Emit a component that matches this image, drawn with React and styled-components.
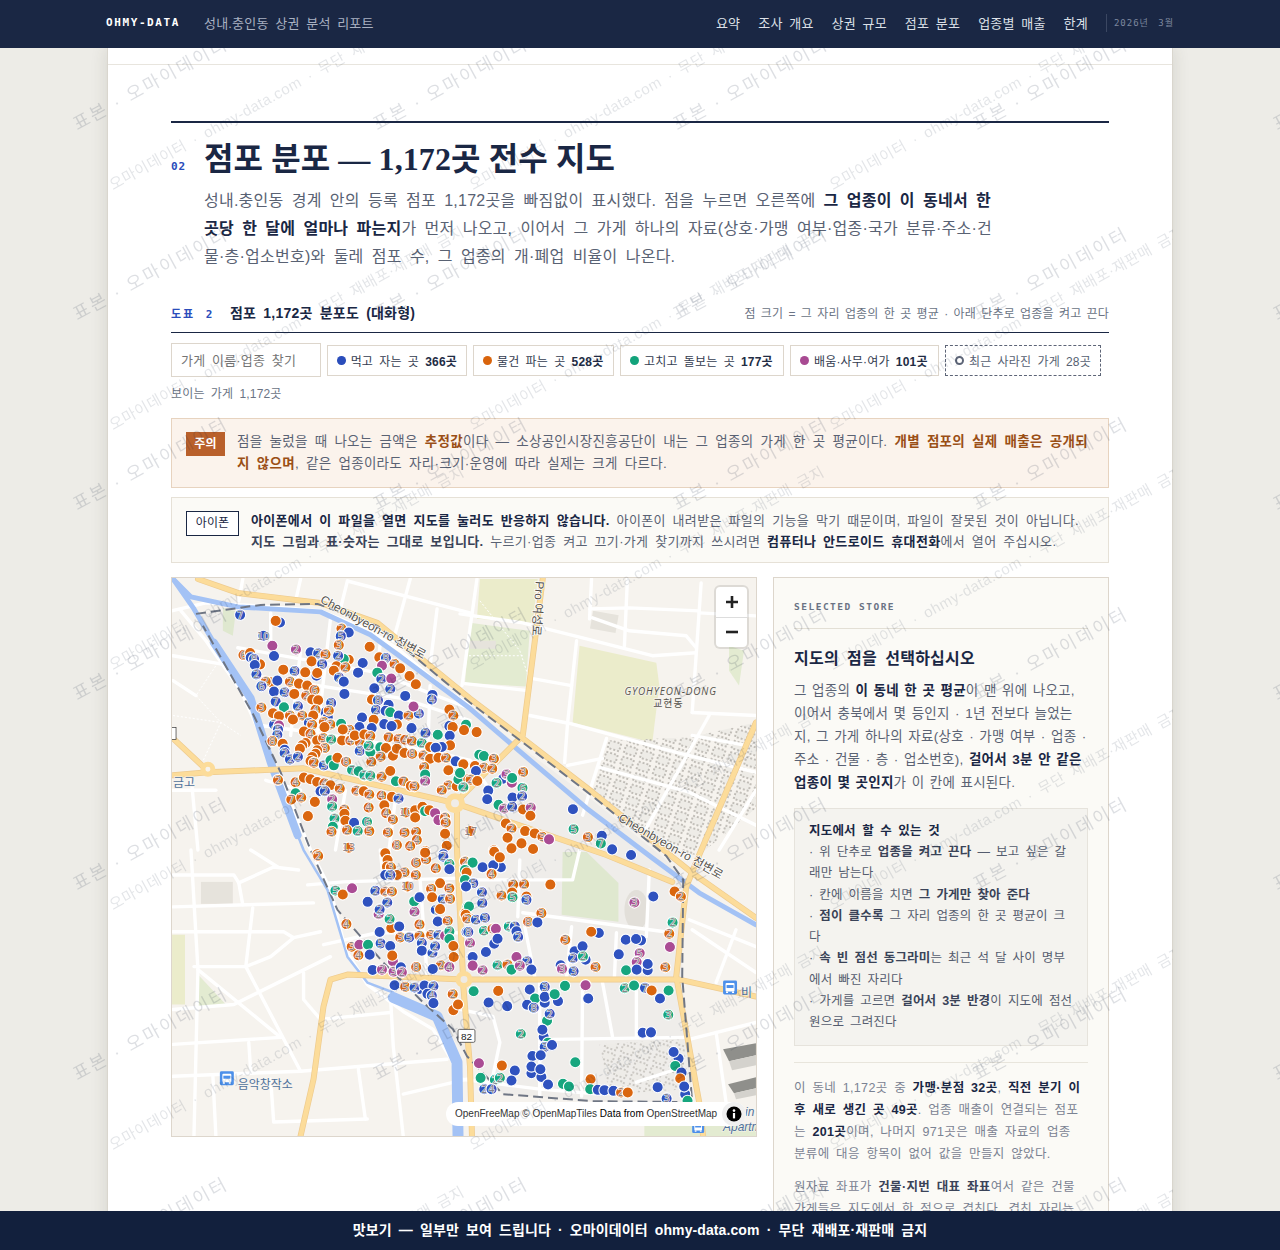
import React from 'react';
import styled, { createGlobalStyle } from 'styled-components';

const NAVY = '#1a2744';
const SANS = '"Liberation Sans", "Noto Sans CJK KR", sans-serif';
const SERIF = '"Liberation Serif", "Noto Sans CJK KR", serif';
const MONO = '"DejaVu Sans Mono", "Noto Sans CJK KR", monospace';

const GlobalStyle = createGlobalStyle`
	html, body {
		margin: 0;
		height: 100%;
		overflow: hidden;
		background: #edece7;
		font-family: ${SANS};
		color: ${NAVY};
	}
	* {
		box-sizing: border-box;
		letter-spacing: 0.015em;
		word-spacing: 0.22em;
	}
`;

const NAV_ITEMS = ['요약', '조사 개요', '상권 규모', '점포 분포', '업종별 매출', '한계'];

const CHIPS = [
	{ color: '#2a4dbb', label: '먹고 자는 곳', count: '366곳', width: 140 },
	{ color: '#d9640c', label: '물건 파는 곳', count: '528곳', width: 141 },
	{ color: '#12a37b', label: '고치고 돌보는 곳', count: '177곳', width: 164 },
	{ color: '#a84a92', label: '배움·사무·여가', count: '101곳', width: 149 },
];

const COLORS = { b: '#2f52bf', o: '#da660f', g: '#17a67e', p: '#aa4c94' };

// 확대 화면에서 옮겨 적은 점: 가로 세로 색 숫자 (좌표는 3배율, 오프셋 따로)
const MARKERS = [
	[170, 575, `208 117 b 7;328 140 b;315 135 o;278 180 b 10;305 210 p;376 221 p 2;310 241 b;218 238 o 6;238 232 o;240 245 b;268 266 o;250 250 b 8;252 268 b;257 296 b 2;300 320 o;320 315 b;285 318 o 2;272 332 b 6;338 282 o;372 286 b 3;404 290 o;358 318 o 2;385 324 o;410 330 o;420 230 b;443 233 b 2;465 236 o 3;423 257 o;455 265 b 5;438 300 b;440 292 o;513 158 o 2;535 170 b;511 181 b 5;505 208 o 3;535 252 o;520 250 g;503 240 b 2;498 272 o;525 275 o 2;490 285 o;506 306 b 2;520 318 b;577 262 b;563 291 b;598 213 o;627 245 o;647 247 b 8;635 270 p;673 265 o 2;690 278 o;621 291 g;633 310 b 2;663 309 p;718 301 o;737 326 o;612 338 b;660 340 b 2;705 361 b;787 358 b;785 372 b 4;522 355 b;310 348 b;342 350 b 3;371 355 o;407 360 o 2;432 343 o 6;425 372 o;443 374 o;315 378 b 7;482 382 b 3;605 372 o;623 374 b 8;655 388 b;617 403 b 2;646 406 b;660 410 g;686 420 b;715 420 o 2;746 414 b 4;730 393 p;272 396 o 3;340 395 g;382 392 b 2;307 413 o;325 422 o;358 420 o 2;395 420 o 3;367 432 o;465 410 b;472 425 b;435 403 o 4;475 405 o 2;428 420 o;415 442 b 3;425 448 o 2;460 440 o 2;480 447 o 2;462 455 o;512 445 g;575 426 b;610 433 o;567 455 b;604 458 b;642 446 b;680 447 o;664 452 b;724 458 b;838 402 o;850 420 o 2;838 452 b;848 455 o;888 447 g;882 463 o;310 447 b 2;325 450 p;322 462 b 5;320 478 b 5;400 468 o;420 475 o 4;305 497 o 8;336 505 o;405 503 o;395 510 o;388 520 o;440 495 o;458 488 o 3;482 492 g 2;515 495 o;540 495 o 4;568 500 o 2;537 463 o 8;517 462 o;553 480 o;582 477 o;600 482 o 2;655 485 o 7;685 490 o 3;705 493 o 4;725 497 o 2;755 503 g 2;766 473 b 2;803 478 g;839 481 b;840 510 o;342 523 b;342 533 b 2;358 552 b 2;382 544 b 2;463 518 o 3;440 525 o;435 535 o;425 545 o;420 557 o;430 562 o 2;460 570 b 3;480 555 g;490 570 g;501 547 o;527 559 o 8;568 527 b 3;600 530 g;595 511 g 2;630 516 g;647 518 o;631 544 o 2;668 541 o;680 520 o;703 533 o;726 535 o 8;760 540 o 2;780 515 o;815 515 b;797 517 b;780 550 o;805 547 o;828 548 o 2;857 558 b;880 566 o;603 560 o 2;545 584 g 7;565 588 g;582 600 g 2;600 601 g 2;634 604 o 2;660 587 o;677 618 g;700 618 o 7;722 632 o;733 633 o 3;762 575 o 2;765 598 g;765 618 p 2;835 585 o;835 630 o 2;815 645 o 2;860 633 o;880 637 g 2;867 592 g;865 612 g;895 612 o;322 614 o 2;375 621 o 4;400 607 o;420 612 o;440 620 o;462 624 o 4;480 630 o;508 640 o 2;450 648 b;463 648 b 2;558 646 o 2;580 648 o;597 658 o 2;634 661 o 4;665 665 o;685 670 b 2;375 654 g;362 673 o 7;392 667 o 2;433 680 o;485 672 p 2;485 694 g 2;642 690 o;595 697 o 4;522 703 o 3;522 716 o;492 730 g 2;525 737 o;551 743 b;590 740 g 6;487 755 g;483 770 o 3;530 765 o 2;562 768 g 2;597 768 o 5;653 772 o 3;703 772 o 5;738 770 o 2;740 795 o 4;720 813 o 4;680 810 o 8;830 812 o;825 776 o;412 723 o;707 712 o 10;735 705 o;735 727 o;757 695 o;765 708 g;778 705 o;795 714 p;805 735 p;825 727 o 3;827 742 o 3;648 714 o 4;668 733 o 3;535 818 o 13;440 838 o;765 828 o 2;645 835 o;820 838 b`],
	[460, 575, `18 448 g;12 464 o;50 470 o;58 538 g;72 542 g;102 550 o 3;10 567 o;45 572 o;72 577 o 2;97 580 o 2;48 587 b;0 593 g;32 613 o 2;52 617 o;10 636 g 2;130 610 b;140 597 p 3;156 622 p;157 608 g;190 590 o 3;110 623 g 2;188 638 g 6;85 646 b;82 672 b;158 667 b;187 663 b 2;116 689 g;133 700 p 2;157 695 b 2;190 703 o;213 697 p 2;212 722 o;340 702 b;138 745 o;155 760 o 2;32 768 o 17;196 768 o;225 775 o;248 785 o 3;268 793 p;143 788 o;185 805 o;155 820 o;220 822 o;102 826 o;342 762 g 5;385 786 o 3;427 782 b;424 805 g 7;458 823 b;515 840 b`],
	[170, 850, `443 18 o 2;495 122 g 5;517 134 o;545 115 p;615 123 b 2;592 156 b;645 125 o 2;665 125 o 3;651 158 b 2;625 193 p 2;628 179 b 2;652 30 o;650 50 o;662 52 o 3;703 67 o 3;680 75 o;737 75 o 3;738 38 o 6;768 28 o 5;765 8 o;797 55 o 4;820 20 b 2;838 42 g 2;838 58 b;645 75 b;660 75 b 3;712 110 o 10;810 100 o;783 117 o 3;838 115 o 5;786 142 o;818 148 b 2;840 147 o 3;732 155 g;748 142 b;733 186 p 2;797 180 b 7;810 178 o;803 215 b;833 213 o 3;748 224 o 4;663 235 o;658 208 g 2;687 230 b;528 223 o 4;628 247 b;690 263 o 3;717 263 b 5;748 258 o 2;783 255 o 3;805 256 b 2;825 258 p;838 245 g 2;838 268 g;755 280 b 2;755 303 b;787 310 b 2;795 290 b 2;850 289 o;851 322 o;544 291 o 3;567 285 p;593 285 g;631 281 b 5;660 289 b;598 315 b;564 317 o 4;668 335 p;666 318 o;812 347 o 2;838 352 p 4;738 352 o 8;607 361 b;635 360 p 2;670 366 p 3;692 353 b;695 368 p 2;788 358 b;673 407 b;705 412 o 5;748 418 b;733 414 b 2;763 408 b;790 410 b 2;772 433 b;785 438 b 4;790 461 b;848 434 o 2;850 482 o;864 465 o;885 35 o 2;885 55 g;890 95 g 3;888 108 b;893 170 g;886 190 o;897 205 o 2;890 247 b 8;905 322 b`],
	[460, 850, `15 35 o 2;38 38 g;68 52 b;123 52 b;100 46 b;103 5 o;120 22 o;95 72 o 4;15 60 g;20 68 o;15 90 g;40 100 b 5;18 110 b;160 104 o 2;193 103 o 2;272 104 o;66 127 b 2;125 137 o 2;157 128 o;158 142 g 5;200 140 o;200 150 b 3;67 160 b 2;27 170 g;245 190 o 3;17 195 o;22 207 o 2;48 210 b 2;75 204 b 3;205 216 o 8;233 218 b;25 247 b 8;72 243 g 2;98 237 o 5;108 237 p;147 230 g 2;165 230 b 1;170 245 b;175 262 b 2;30 280 p 2;103 282 b;113 267 b;78 307 b;38 322 b;170 322 p;202 335 b 2;113 347 g 2;143 345 o 2;155 360 g;180 348 p 2;215 360 b;38 348 p;68 362 p 2;317 270 o 3;418 250 b;395 246 o;345 305 b;369 290 b;340 326 b 2;378 330 b;370 320 g 2;303 347 b;307 358 p 3;342 365 b 3;408 352 o 3;499 270 b;545 272 b;530 268 b;478 314 b;541 310 p 5;532 337 p 2;500 362 g;532 360 b;565 362 b;565 343 b;618 353 o 3;582 140 b;525 158 p 3;646 125 o;665 140 o 2;640 218 g 2;630 252 o 2;632 292 p;41 425 g;115 424 o;86 459 b;142 470 b;210 420 b;255 412 b 3;316 409 g;378 407 p;255 460 b;226 447 g;255 442 b;295 455 b;285 434 g;202 466 b;222 475 b 8;386 447 b;496 416 g 2;524 408 g;557 415 b 7;577 423 o;628 423 g;602 447 b;627 496 g 3;262 514 g;270 493 b 2;183 554 g 2;252 562 b;248 541 b;265 580 g;255 593 b 3;277 587 b;550 550 b;575 549 b;218 620 b;243 618 b;215 672 b;215 652 b;245 683 b;242 660 b;265 706 b;57 642 p;126 649 o;165 664 b;155 694 b;62 686 g;105 692 g 2;120 686 g 2;347 639 g;310 704 g;328 712 g;393 690 o;392 720 g;415 722 b;435 723 b;462 725 b;485 730 o 2;505 730 o;595 714 b;658 628 b;643 608 b;648 650 g;667 670 b;663 688 o;678 735 b;675 712 b;685 755 g;622 748 b 3;73 720 b 2;95 720 b 4`],
];

const markers = MARKERS.flatMap(([ox, oy, text]) =>
	text.split(';').map((row) => {
		const [x, y, c, n] = row.split(' ');
		return { x: ox + x / 3, y: oy + y / 3, color: COLORS[c], n };
	}),
);

const WHITE_ROADS = [
	'170,610 205,602 260,605 320,610 370,630 400,650 440,685 470,705',
	'180,610 205,640 240,690 260,735 285,790 310,850 330,890 345,950 367,985 403,1012 433,1030 453,1063 458,1100',
	'172,655 230,665',
	'172,680 195,695',
	'242,578 238,600',
	'300,578 295,600',
	'347,580 340,608',
	'410,578 393,640',
	'347,580 470,612',
	'437,608 430,665',
	'237,647 377,672 423,690 470,708',
	'253,675 350,690 403,698 470,720',
	'260,725 313,732 437,752 470,760',
	'270,612 270,640',
	'330,618 317,732',
	'380,642 370,738',
	'430,685 427,765',
	'300,650 290,735',
	'265,780 300,790',
	'345,790 335,850',
	'395,800 385,880',
	'190,850 197,970 193,1137',
	'172,875 233,875 238,883 273,867 298,870',
	'250,850 277,867',
	'238,883 242,905',
	'172,907 313,903',
	'172,932 283,932 293,938 320,932',
	'193,967 245,967 270,957 293,938',
	'252,908 245,967 300,1072',
	'197,970 280,1038',
	'172,1010 233,1005 330,957',
	'172,1045 280,1038',
	'303,973 303,1000 320,1020 390,1013',
	'172,1077 300,1072 447,1060',
	'248,1043 250,1073',
	'212,1077 215,1137',
	'270,1080 273,1123 367,1120',
	'358,1070 365,1120',
	'390,993 393,1047 403,1137',
	'403,1095 467,1080',
	'307,885 343,882 465,878',
	'323,945 377,933 463,933',
	'380,850 383,880',
	'420,880 427,977',
	'172,790 215,790',
	'190,775 197,850',
	'467,880 573,880 580,850',
	'523,913 673,933',
	'520,860 518,917',
	'525,927 535,977',
	'572,927 567,977',
	'617,933 615,977',
	'650,870 647,937',
	'460,1010 493,1017 500,1043 493,1077',
	'540,983 540,1097',
	'583,983 582,1097',
	'603,983 613,1037',
	'637,990 637,1037',
	'553,1040 687,1038',
	'462,1080 540,1090 600,1095',
	'637,1083 677,1070',
	'690,920 757,947',
	'693,930 757,973',
	'737,930 717,983',
	'690,1040 757,1023',
	'717,1033 727,1103',
	'477,578 462,685',
	'460,613 523,622 587,638 653,655 697,652',
	'592,578 590,618',
	'628,578 625,645',
	'590,608 630,607 700,610',
	'702,582 693,712',
	'593,617 630,630 687,635 697,647',
	'577,640 568,722 565,762',
	'533,678 572,685',
	'465,683 528,690',
	'530,715 570,723 677,752 757,772',
	'607,738 593,782 583,815',
	'568,765 603,758',
	'600,767 690,792 757,825',
	'710,715 643,835',
	'693,735 747,745',
	'693,712 757,715',
	'757,790 720,850',
	'700,612 757,615',
	'470,760 490,790',
];

const YELLOW_ROADS = [
	'197,578 237,592 320,602 377,622 470,698 523,738 593,792 667,852 693,873 757,918',
	'543,578 523,735',
	'757,722 700,855 687,887 677,977 700,1103 704,1137',
	'172,738 203,767 207,769',
	'172,775 207,772 303,768 455,803',
	'455,803 520,738',
	'455,803 607,855 673,882',
	'457,803 457,850 463,977',
	'300,1137 313,1080 323,1007 330,980 347,975 463,980',
	'463,980 680,980 757,997',
	'463,983 470,1067 472,1137',
];

const Header = () => (
	<TopBar>
		<TopInner>
			<Brand>OHMY-DATA</Brand>
			<Subtitle>성내.충인동 상권 분석 리포트</Subtitle>
			<TopNav>
				{NAV_ITEMS.map((item) => (
					<TopLink key={item}>{item}</TopLink>
				))}
				<DateLabel>2026년 3월</DateLabel>
			</TopNav>
		</TopInner>
	</TopBar>
);

const BusIcon = ({ x, y, size = 14 }) => (
	<g transform={`translate(${x} ${y}) scale(${size / 14})`}>
		<rect width="14" height="14" rx="1.5" fill="#4d90ea" />
		<rect x="2.5" y="2.5" width="9" height="8.5" rx="1" fill="#fff" />
		<rect x="3.5" y="4.5" width="7" height="3" fill="#4d90ea" />
		<rect x="3" y="11" width="2" height="1.5" fill="#fff" />
		<rect x="9" y="11" width="2" height="1.5" fill="#fff" />
	</g>
);

const StoreMap = () => (
	<MapSvg viewBox="171 577 586 560" xmlns="http://www.w3.org/2000/svg">
		<defs>
			<pattern id="lots" width="17" height="12" patternUnits="userSpaceOnUse" patternTransform="rotate(17)">
				<rect x="1" y="1" width="12" height="8" fill="#eeece7" stroke="#77746c" strokeWidth="0.8" strokeDasharray="2 2" />
			</pattern>
		</defs>
		<rect x="171" y="577" width="586" height="560" fill="#f6f3ee" />

		{/* 분석 구역 */}
		<polygon points="195,613 260,608 320,612 377,632 470,708 523,748 593,800 667,860 684,880 683,977 693,1103 593,1102 503,1095 467,1057 423,1003 383,963 337,910 307,845 280,772 253,715 202,625" fill="#efedea" />

		{/* 공원 */}
		<polygon points="580,645 657,662 660,685 653,742 573,722" fill="#ebeccb" />
		<polygon points="480,578 538,578 533,622 477,618" fill="#ebeccb" />
		<polygon points="470,622 530,630 526,686 465,682" fill="#e3ebd1" />
		<polygon points="563,852 587,852 619,883 619,922 562,915" fill="#dfe8cf" />
		<polygon points="171,935 184,935 184,1005 171,1005" fill="#ebeccb" />
		<polygon points="197,975 225,1005 197,1007" fill="#e3ebd1" />
		<polygon points="222,607 235,610 232,635 222,630" fill="#dfe8cf" />
		<polygon points="730,645 745,650 740,685 730,670" fill="#e3ebd1" />
		<polygon points="645,1138 757,1138 757,1125 645,1125" fill="#e3ebd1" />

		{/* 건물 덩어리 */}
		<polygon points="607,740 690,737 757,722 757,808 700,855 660,852 593,790" fill="url(#lots)" />
		<polygon points="600,1045 685,1040 688,1090 610,1095" fill="url(#lots)" opacity="0.75" />
		<rect x="592" y="612" width="26" height="18" fill="#e6e3dc" transform="rotate(10 605 620)" />
		<rect x="200" y="882" width="32" height="22" fill="#e6e3dc" />
		<ellipse cx="637" cy="910" rx="12" ry="20" fill="#e2dfd9" />
		<rect x="470" y="640" width="26" height="8" fill="#e6e3dc" />
		<polygon points="724,1050 757,1044 757,1056 730,1062" fill="#8f8f8b" />
		<polygon points="730,1062 757,1056 757,1066 733,1071" fill="#d4d2cd" />
		<polygon points="729,1085 757,1078 757,1089 735,1094" fill="#8f8f8b" />
		<polygon points="735,1094 757,1089 757,1096 737,1100" fill="#d4d2cd" />

		{/* 길 */}
		<g fill="none" stroke="#fff" strokeWidth="3.4" strokeLinejoin="round" strokeLinecap="round">
			{WHITE_ROADS.map((points) => (
				<polyline key={points} points={points} />
			))}
		</g>
		<g fill="none" stroke="#fff" strokeWidth="1" strokeDasharray="2 2">
			<polyline points="217,662 195,695 220,722 200,765" />
			<polyline points="172,715 220,722 240,735" />
			<polyline points="480,600 520,650 530,680" />
			<polyline points="465,655 525,655" />
		</g>

		{/* 물길 */}
		<g fill="none" stroke="#a3c2f5" strokeLinejoin="round" strokeLinecap="round">
			<polyline points="172,578 193,608 213,642" strokeWidth="5" />
			<polyline points="213,642 250,698 270,762 297,835" strokeWidth="8" />
			<polyline points="297,835 303,850 327,890 347,957 367,983 393,993" strokeWidth="2.5" />
			<polyline points="393,998 437,1017 457,1063 458,1137" strokeWidth="11" />
			<polyline points="172,578 190,596 237,606 320,611 370,634 403,658 470,708 520,751 587,808 653,858 700,893 757,925" strokeWidth="5" />
		</g>

		<g fill="none" strokeLinejoin="round" strokeLinecap="round">
			<g stroke="#eecb8f" strokeWidth="6">
				{YELLOW_ROADS.map((points) => (
					<polyline key={points} points={points} />
				))}
			</g>
			<g stroke="#fcdc9a" strokeWidth="4.6">
				{YELLOW_ROADS.map((points) => (
					<polyline key={points} points={points} />
				))}
			</g>
		</g>
		<circle cx="207" cy="769" r="5" fill="#f6f3ee" stroke="#fcdc9a" strokeWidth="5" />
		<circle cx="455" cy="803" r="7" fill="#f0ede8" stroke="#fcdc9a" strokeWidth="6" />
		<circle cx="464" cy="980" r="6" fill="#eeeae4" stroke="#fcdc9a" strokeWidth="5" />

		{/* 구역 경계 */}
		<polyline
			points="195,613 260,604 317,603 377,625 470,702 523,742 593,796 667,856 684,880 683,977 693,1103 593,1102 503,1095 467,1057 453,1030 423,1003 383,963 337,910 310,850 280,772 253,715 202,625"
			fill="none"
			stroke="#6f7684"
			strokeWidth="2"
			strokeDasharray="10 5"
		/>

		{/* 지도 글자 */}
		<MapRoadLabel transform="translate(319 601) rotate(29)">Cheonbyeon-ro 천변로</MapRoadLabel>
		<MapRoadLabel transform="translate(618 820) rotate(30)">Cheonbyeon-ro 천변로</MapRoadLabel>
		<MapRoadLabel transform="translate(536 580) rotate(94)">Pro 여성로</MapRoadLabel>
		<MapPlaceLabel x="625" y="694" fontStyle="italic">GYOHYEON-DONG</MapPlaceLabel>
		<MapPlaceLabel x="654" y="706">교현동</MapPlaceLabel>
		<MapPoiLabel x="172" y="787">금고</MapPoiLabel>
		<MapPoiLabel x="237" y="1090">음악창작소</MapPoiLabel>
		<MapPoiLabel x="742" y="998">비</MapPoiLabel>
		<MapPoiLabel x="746" y="1117" fontStyle="italic">in</MapPoiLabel>
		<MapPoiLabel x="724" y="1132" fontStyle="italic">Apartm</MapPoiLabel>
		<BusIcon x="219" y="1072" />
		<BusIcon x="724" y="981" />
		<BusIcon x="693" y="1122" size="12" />
		<rect x="458" y="1030" width="17" height="13" rx="1.5" fill="#fff" stroke="#444" strokeWidth="0.8" />
		<MapShield x="466.5" y="1040.5">82</MapShield>
		<rect x="170" y="727" width="5" height="12" fill="#fff" stroke="#333" strokeWidth="0.7" />

		{/* 점포 */}
		{markers.map((m, i) => (
			<g key={i}>
				<circle cx={m.x} cy={m.y} r="5.6" fill={m.color} stroke="#fff" strokeWidth="1.1" />
				{m.n && (
					<MarkerDigit x={m.x} y={m.y + 3.8}>
						{m.n}
					</MarkerDigit>
				)}
			</g>
		))}
	</MapSvg>
);

const MapBox = () => (
	<MapFrame>
		<StoreMap />
		<ZoomControl>
			<ZoomButton aria-label="확대">
				<svg width="14" height="14" viewBox="0 0 14 14">
					<path d="M1 7h12M7 1v12" stroke="#222" strokeWidth="2.6" />
				</svg>
			</ZoomButton>
			<ZoomButton aria-label="축소">
				<svg width="14" height="14" viewBox="0 0 14 14">
					<path d="M1 7h12" stroke="#222" strokeWidth="2.6" />
				</svg>
			</ZoomButton>
		</ZoomControl>
		<Attribution>
			<span>
				OpenFreeMap © OpenMapTiles <b>Data from</b> OpenStreetMap
			</span>
			<InfoDot>
				<svg width="16" height="16" viewBox="0 0 16 16">
					<circle cx="8" cy="8" r="7.5" fill="#000" />
					<rect x="6.9" y="7" width="2.2" height="5.4" fill="#fff" />
					<circle cx="8" cy="4.6" r="1.3" fill="#fff" />
				</svg>
			</InfoDot>
		</Attribution>
	</MapFrame>
);

const SidePanel = () => (
	<Panel>
		<PanelEyebrow>SELECTED STORE</PanelEyebrow>
		<PanelTitle>지도의 점을 선택하십시오</PanelTitle>
		<PanelText>
			그 업종의 <b>이 동네 한 곳 평균</b>이 맨 위에 나오고, 이어서 충북에서 몇 등인지 · 1년 전보다 늘었는지, 그 가게 하나의 자료(상호 ·
			가맹 여부 · 업종 · 주소 · 건물 · 층 · 업소번호), <b>걸어서 3분 안 같은 업종이 몇 곳인지</b>가 이 칸에 표시된다.
		</PanelText>
		<HelpBox>
			<HelpTitle>지도에서 할 수 있는 것</HelpTitle>
			<HelpLine>
				· 위 단추로 <b>업종을 켜고 끈다</b> — 보고 싶은 갈래만 남는다
			</HelpLine>
			<HelpLine>
				· 칸에 이름을 치면 <b>그 가게만 찾아 준다</b>
			</HelpLine>
			<HelpLine>
				· <b>점이 클수록</b> 그 자리 업종의 한 곳 평균이 크다
			</HelpLine>
			<HelpLine>
				· <b>속 빈 점선 동그라미</b>는 최근 석 달 사이 명부에서 빠진 자리다
			</HelpLine>
			<HelpLine>
				· 가게를 고르면 <b>걸어서 3분 반경</b>이 지도에 점선 원으로 그려진다
			</HelpLine>
		</HelpBox>
		<PanelNote>
			이 동네 1,172곳 중 <b>가맹·분점 32곳</b>, <b>직전 분기 이후 새로 생긴 곳 49곳</b>. 업종 매출이 연결되는 점포는 <b>201곳</b>이며,
			나머지 971곳은 매출 자료의 업종 분류에 대응 항목이 없어 값을 만들지 않았다.
		</PanelNote>
		<PanelNoteNext>
			원자료 좌표가 <b>건물·지번 대표 좌표</b>여서 같은 건물 가게들은 지도에서 한 점으로 겹친다. 겹친 자리는 숫자로 표시한다.
		</PanelNoteNext>
	</Panel>
);

const Watermarks = () => {
	const big = [];
	const small = [];
	for (let r = 0; r < 7; r++) {
		for (let c = 0; c < 5; c++) {
			big.push({ left: 80 + c * 300, top: 112 + r * 190 });
		}
	}
	for (let r = 0; r < 6; r++) {
		for (let c = 0; c < 3; c++) {
			small.push({ left: 8 + c * 360, top: 176 + r * 240 });
		}
	}
	return (
		<WatermarkLayer aria-hidden="true">
			{big.map((pos) => (
				<BigMark key={`${pos.left}-${pos.top}`} style={pos}>
					표본 · 오마이데이터
				</BigMark>
			))}
			<SheetMarks>
				{small.map((pos) => (
					<SmallMark key={`${pos.left}-${pos.top}`} style={pos}>
						오마이데이터 · ohmy-data.com · 무단 재배포·재판매 금지
					</SmallMark>
				))}
			</SheetMarks>
		</WatermarkLayer>
	);
};

const App = () => (
	<>
		<GlobalStyle />
		<Header />
		<Sheet>
			<PrevEdge />
			<Section>
				<SectionHead>
					<SectionNo>02</SectionNo>
					<SectionTitle>점포 분포 — 1,172곳 전수 지도</SectionTitle>
				</SectionHead>
				<Lead>
					성내.충인동 경계 안의 등록 점포 1,172곳을 빠짐없이 표시했다. 점을 누르면 오른쪽에 <b>그 업종이 이 동네서 한 곳당 한 달에 얼마나 파는지</b>가
					먼저 나오고, 이어서 그 가게 하나의 자료(상호·가맹 여부·업종·국가 분류·주소·건물·층·업소번호)와 둘레 점포 수, 그 업종의 개·폐업 비율이
					나온다.
				</Lead>
				<FigureHead>
					<FigureNo>도표 2</FigureNo>
					<FigureTitle>점포 1,172곳 분포도 (대화형)</FigureTitle>
					<FigureNote>점 크기 = 그 자리 업종의 한 곳 평균 · 아래 단추로 업종을 켜고 끈다</FigureNote>
				</FigureHead>
				<Controls>
					<SearchBox placeholder="가게 이름·업종 찾기" />
					{CHIPS.map((chip) => (
						<Chip key={chip.label} $width={chip.width}>
							<Dot $color={chip.color} />
							{chip.label} <b>{chip.count}</b>
						</Chip>
					))}
					<Chip $dashed $width={156}>
						<RingDot />
						최근 사라진 가게 28곳
					</Chip>
				</Controls>
				<VisibleCount>보이는 가게 1,172곳</VisibleCount>
				<Notice $tone="warn">
					<WarnTag>주의</WarnTag>
					<WarnText>
						점을 눌렀을 때 나오는 금액은 <em>추정값</em>이다 — 소상공인시장진흥공단이 내는 그 업종의 가게 한 곳 평균이다.{' '}
						<em>개별 점포의 실제 매출은 공개되지 않으며</em>, 같은 업종이라도 자리·크기·운영에 따라 실제는 크게 다르다.
					</WarnText>
				</Notice>
				<Notice>
					<PhoneTag>아이폰</PhoneTag>
					<PhoneText>
						<b>아이폰에서 이 파일을 열면 지도를 눌러도 반응하지 않습니다.</b> 아이폰이 내려받은 파일의 기능을 막기 때문이며, 파일이 잘못된 것이
						아닙니다. <strong>지도 그림과 표·숫자는 그대로 보입니다.</strong> 누르기·업종 켜고 끄기·가게 찾기까지 쓰시려면{' '}
						<b>컴퓨터나 안드로이드 휴대전화</b>에서 열어 주십시오.
					</PhoneText>
				</Notice>
				<MapGrid>
					<MapBox />
					<SidePanel />
				</MapGrid>
			</Section>
		</Sheet>
		<Watermarks />
		<BottomBar>맛보기 — 일부만 보여 드립니다 · 오마이데이터 ohmy-data.com · 무단 재배포·재판매 금지</BottomBar>
	</>
);

const TopBar = styled.header`
	position: relative;
	z-index: 10;
	height: 48px;
	background: ${NAVY};
`;

const TopInner = styled.div`
	width: 1068px;
	height: 100%;
	margin: 0 auto;
	padding-bottom: 3px;
	display: flex;
	align-items: center;
`;

const Brand = styled.div`
	font-family: ${MONO};
	font-size: 11px;
	font-weight: 700;
	letter-spacing: 1.6px;
	color: #fff;
	width: 98px;
`;

const Subtitle = styled.div`
	font-size: 13px;
	color: #a9b1c2;
`;

const TopNav = styled.nav`
	margin-left: auto;
	display: flex;
	align-items: center;
	gap: 18px;
`;

const TopLink = styled.a`
	font-size: 13px;
	color: #dde1e8;
`;

const DateLabel = styled.div`
	font-family: ${MONO};
	font-size: 9px;
	letter-spacing: 1px;
	word-spacing: 3px;
	color: #7d889f;
	height: 18px;
	line-height: 18px;
	padding-left: 7px;
	border-left: 1px solid #3b4762;
	white-space: pre;
`;

const Sheet = styled.main`
	width: 1066px;
	min-height: 1300px;
	margin: 0 auto;
	background: #fff;
	border-left: 1px solid #d9d6ce;
	border-right: 1px solid #d9d6ce;
	box-shadow: 0 0 16px rgba(60, 55, 40, 0.14);
`;

const PrevEdge = styled.div`
	height: 17px;
	border-bottom: 1px solid #e8e5de;
`;

const Section = styled.section`
	margin: 56px 63px 0;
	border-top: 2px solid ${NAVY};
`;

const SectionHead = styled.div`
	display: flex;
	align-items: baseline;
	padding-top: 14px;
`;

const SectionNo = styled.span`
	width: 33px;
	font-family: ${MONO};
	font-size: 11px;
	font-weight: 700;
	letter-spacing: 1px;
	color: #2a4dbb;
`;

const SectionTitle = styled.h2`
	margin: 0;
	font-family: ${SERIF};
	font-size: 32px;
	line-height: 44px;
	font-weight: 700;
	letter-spacing: 0.1px;
	word-spacing: 0;
	color: ${NAVY};
`;

const Lead = styled.p`
	margin: 6px 0 0 33px;
	width: 790px;
	font-size: 16px;
	line-height: 28px;
	color: #596273;
	b {
		color: ${NAVY};
	}
`;

const FigureHead = styled.div`
	display: flex;
	align-items: baseline;
	margin-top: 31px;
	padding-bottom: 10px;
	border-bottom: 1px solid ${NAVY};
`;

const FigureNo = styled.span`
	width: 59px;
	font-family: ${MONO};
	font-size: 11px;
	font-weight: 700;
	letter-spacing: 2px;
	word-spacing: 2px;
	color: #2a4dbb;
`;

const FigureTitle = styled.span`
	font-size: 14px;
	font-weight: 700;
	color: ${NAVY};
`;

const FigureNote = styled.span`
	margin-left: auto;
	font-size: 12px;
	word-spacing: 0.14em;
	color: #6a7384;
`;

const Controls = styled.div`
	display: flex;
	align-items: center;
	gap: 6px;
	margin-top: 10px;
`;

const SearchBox = styled.input`
	width: 150px;
	height: 34px;
	padding: 0 9px;
	border: 1px solid #ddd6cc;
	background: #fff;
	font-family: ${SANS};
	font-size: 13px;
	&::placeholder {
		color: #757575;
	}
`;

const Chip = styled.div`
	width: ${(p) => p.$width}px;
	height: 31px;
	display: flex;
	align-items: center;
	padding: 0 9px;
	border: 1px ${(p) => (p.$dashed ? 'dashed #5d6577' : 'solid #ddd6cc')};
	background: #fff;
	font-size: 12px;
	color: ${(p) => (p.$dashed ? '#565f72' : '#333c50')};
	white-space: pre;
	b {
		color: #222c44;
	}
`;

const Dot = styled.span`
	width: 9px;
	height: 9px;
	margin-right: 5px;
	border-radius: 50%;
	background: ${(p) => p.$color};
`;

const RingDot = styled.span`
	width: 9px;
	height: 9px;
	margin-right: 5px;
	border-radius: 50%;
	border: 2px solid #5d6577;
`;

const VisibleCount = styled.div`
	margin-top: 9px;
	font-size: 12px;
	line-height: 16px;
	color: #6a7384;
`;

const Notice = styled.div`
	display: flex;
	align-items: flex-start;
	margin-top: ${(p) => (p.$tone === 'warn' ? '16px' : '9px')};
	padding: 13px 14px ${(p) => (p.$tone === 'warn' ? '12px' : '11px')};
	background: ${(p) => (p.$tone === 'warn' ? '#fbf3ec' : '#fbfaf6')};
	border: 1px solid ${(p) => (p.$tone === 'warn' ? '#e7d3bf' : '#e6e1d7')};
`;

const WarnTag = styled.span`
	flex: none;
	width: 39px;
	height: 24px;
	line-height: 24px;
	text-align: center;
	margin-right: 12px;
	background: #b9602b;
	color: #fff;
	font-size: 12px;
	font-weight: 700;
`;

const WarnText = styled.p`
	margin: -1px 0 -1px;
	font-size: 13.5px;
	line-height: 22.4px;
	letter-spacing: 0.3px;
	color: #5a6273;
	em {
		font-style: normal;
		font-weight: 700;
		letter-spacing: 0.3px;
		color: #9a4f16;
	}
`;

const PhoneTag = styled.span`
	flex: none;
	width: 53px;
	height: 25px;
	line-height: 23px;
	text-align: center;
	margin-right: 12px;
	border: 1px solid ${NAVY};
	background: #fff;
	font-size: 12px;
	color: ${NAVY};
`;

const PhoneText = styled.p`
	margin: -1px 0 -1px;
	font-size: 13px;
	line-height: 21px;
	letter-spacing: 0.33px;
	color: #5a6273;
	b {
		letter-spacing: 0.33px;
		color: ${NAVY};
	}
	strong {
		letter-spacing: 0.33px;
		color: #3a4358;
	}
`;

const MapGrid = styled.div`
	display: grid;
	grid-template-columns: 586px 336px;
	column-gap: 16px;
	align-items: start;
	margin-top: 14px;
`;

const MapFrame = styled.div`
	position: relative;
	height: 560px;
	border: 1px solid #ddd6cc;
	overflow: hidden;
	* {
		letter-spacing: 0;
		word-spacing: 0;
	}
`;

const MapSvg = styled.svg`
	display: block;
	width: 100%;
	height: 100%;
`;

const MapRoadLabel = styled.text`
	font-family: ${SANS};
	font-size: 12px;
	fill: #55524c;
	stroke: #fff;
	stroke-width: 1.5px;
	paint-order: stroke;
`;

const MapPlaceLabel = styled.text`
	&& {
		letter-spacing: 0.9px;
	}
	font-family: "Open Sans", "Noto Sans CJK KR", sans-serif;
	font-size: 10px;
	fill: #55524c;
	stroke: #f6f3ee;
	stroke-width: 1.5px;
	paint-order: stroke;
`;

const MapPoiLabel = styled.text`
	font-family: ${SANS};
	font-size: 12px;
	fill: #4f719b;
	stroke: #f6f3ee;
	stroke-width: 1.2px;
	paint-order: stroke;
`;

const MapShield = styled.text`
	font-family: ${SANS};
	font-size: 10px;
	text-anchor: middle;
	fill: #222;
`;

const MarkerDigit = styled.text`
	font-family: "DejaVu Sans", sans-serif;
	font-size: 10.5px;
	text-anchor: middle;
	fill: rgba(50, 40, 50, 0.55);
	stroke: rgba(255, 255, 255, 0.9);
	stroke-width: 1.1px;
	paint-order: stroke;
`;

const ZoomControl = styled.div`
	position: absolute;
	top: 9px;
	right: 9px;
	width: 31px;
	display: flex;
	flex-direction: column;
	background: #fff;
	border-radius: 4px;
	box-shadow: 0 0 0 2px rgba(0, 0, 0, 0.1);
`;

const ZoomButton = styled.div`
	height: 30px;
	display: flex;
	align-items: center;
	justify-content: center;
	& + & {
		border-top: 1px solid #ddd;
	}
`;

const Attribution = styled.div`
	position: absolute;
	right: 10px;
	bottom: 10px;
	height: 24px;
	width: 300px;
	display: flex;
	align-items: center;
	padding-left: 9px;
	background: #fff;
	border-radius: 12px;
	font-family: ${SANS};
	font-size: 10px;
	color: #333;
	b {
		font-weight: 400;
		color: #000;
	}
`;

const InfoDot = styled.div`
	position: absolute;
	right: 0;
	top: 0;
	width: 24px;
	height: 24px;
	border-radius: 50%;
	background: #f0f0f0;
	display: flex;
	align-items: center;
	justify-content: center;
`;

const Panel = styled.aside`
	border: 1px solid #ddd6cc;
	background: #fbfaf6;
	padding: 22px 20px 20px;
`;

const PanelEyebrow = styled.div`
	padding-bottom: 14px;
	border-bottom: 1px solid #e3dfd5;
	font-family: ${MONO};
	font-size: 9.5px;
	font-weight: 700;
	letter-spacing: 1.5px;
	word-spacing: 0;
	line-height: 14px;
	color: #6a7384;
`;

const PanelTitle = styled.h3`
	margin: 19px 0 0;
	font-size: 16px;
	line-height: 22px;
	font-weight: 700;
	color: ${NAVY};
`;

const PanelText = styled.p`
	margin: 9px 0 0;
	font-size: 13.5px;
	line-height: 23px;
	letter-spacing: 0.27px;
	word-spacing: 0.1em;
	color: #5a6273;
	b {
		letter-spacing: 0.27px;
		word-spacing: 0.1em;
		color: ${NAVY};
	}
`;

const HelpBox = styled.div`
	margin-top: 14px;
	padding: 12px 14px;
	background: #f4f3ef;
	border: 1px solid #e6e3dc;
	font-size: 12.5px;
	line-height: 21.25px;
	color: #545c6e;
	b {
		word-spacing: 0.18em;
		color: #3a4358;
	}
`;

const HelpTitle = styled.div`
	font-weight: 700;
	color: ${NAVY};
`;

const HelpLine = styled.div`
	word-spacing: 0.18em;
`;

const PanelNote = styled.p`
	margin: 16px 0 0;
	padding-top: 14px;
	border-top: 1px solid #e8e5dc;
	font-size: 12.5px;
	line-height: 22px;
	letter-spacing: 0.35px;
	color: #7a8292;
	b {
		letter-spacing: 0.35px;
		color: ${NAVY};
	}
`;

const PanelNoteNext = styled.p`
	margin: 11px 0 0;
	font-size: 12.5px;
	line-height: 22px;
	letter-spacing: 0.35px;
	color: #7a8292;
	b {
		letter-spacing: 0.35px;
		color: #3a4358;
	}
`;

const WatermarkLayer = styled.div`
	position: fixed;
	inset: 0;
	z-index: 5;
	overflow: hidden;
	pointer-events: none;
`;

const SheetMarks = styled.div`
	position: absolute;
	top: 0;
	bottom: 0;
	left: 107px;
	width: 1066px;
	overflow: hidden;
`;

const BigMark = styled.span`
	position: absolute;
	transform-origin: left bottom;
	transform: rotate(-28.5deg);
	font-size: 18px;
	line-height: 24px;
	letter-spacing: 2.3px;
	word-spacing: 0;
	white-space: nowrap;
	color: rgba(26, 39, 68, 0.15);
`;

const SmallMark = styled.span`
	position: absolute;
	transform-origin: left bottom;
	transform: rotate(-29deg);
	font-size: 15px;
	line-height: 18px;
	letter-spacing: 0.5px;
	white-space: nowrap;
	color: rgba(26, 39, 68, 0.12);
`;

const BottomBar = styled.footer`
	position: fixed;
	left: 0;
	right: 0;
	bottom: 0;
	z-index: 10;
	height: 39px;
	padding-bottom: 3px;
	display: flex;
	align-items: center;
	justify-content: center;
	background: #12203d;
	color: #fff;
	font-family: ${SANS};
	font-size: 14px;
	font-weight: 700;
	letter-spacing: 0.1px;
`;

export default App;
